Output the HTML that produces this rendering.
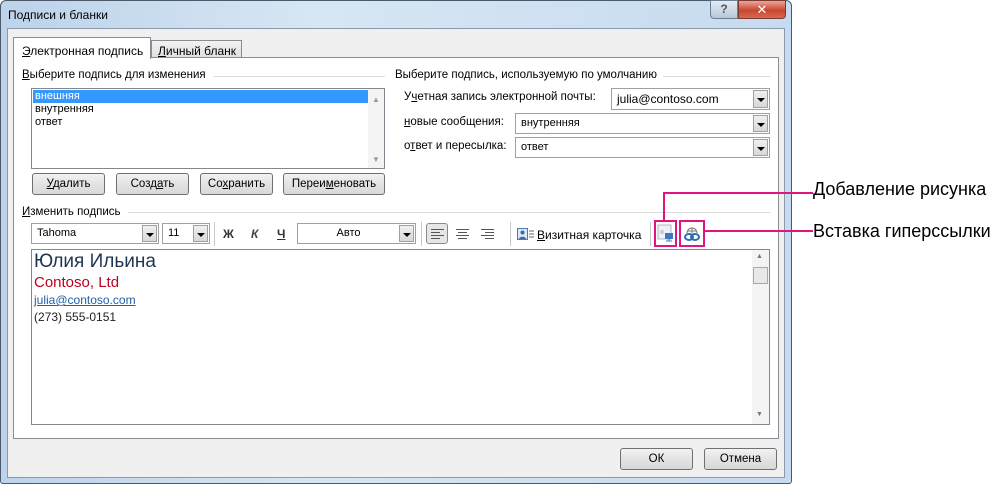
<!DOCTYPE html><html><head><meta charset="utf-8"><style>
body{margin:0;width:995px;height:486px;background:#fff;position:relative;overflow:hidden;font-family:"Liberation Sans","DejaVu Sans",sans-serif;font-size:11px;color:#000}
.a{position:absolute}
.btn{position:absolute;border:1px solid #707070;border-radius:3px;background:linear-gradient(#f2f2f2,#e3e3e3 50%,#d9d9d9);text-align:center;font-size:11.5px;line-height:20px;box-sizing:border-box}
.combo{position:absolute;border:1px solid #a0a0a0;background:#fff;box-sizing:border-box;font-size:11px;padding-left:5px}
.dd{position:absolute;right:1px;top:1px;bottom:1px;width:15px;background:linear-gradient(#f0f0f0,#d8d8d8);border:1px solid #a0a0a0;box-sizing:border-box}
.dd:after{content:"";position:absolute;left:3px;top:7px;border:4px solid transparent;border-top:4px solid #000;border-bottom:0}
.line{position:absolute;height:1px;background:#dcdcdc}
.pink{position:absolute;background:#e0157f}
</style></head><body>
<div class="a" style="left:0;top:0;width:792px;height:484px;background:linear-gradient(90deg,#bcd3ea,#d7e6f4 40%,#c6dbef);border:1px solid #4a5a6a;border-radius:6px 6px 3px 3px;box-sizing:border-box"></div>
<div class="a" style="left:8px;top:8px;font-size:12px">Подписи и бланки</div>
<div class="a" style="left:710px;top:0;width:28px;height:19px;background:linear-gradient(#e4ecf5,#b8c7d8);border:1px solid #6c7f92;border-radius:0 0 0 4px;box-sizing:border-box;text-align:center;color:#555;font-weight:bold;font-size:12px;line-height:17px">?</div>
<div class="a" style="left:738px;top:0;width:48px;height:19px;background:linear-gradient(#e8a89a,#c9462f 55%,#d66a52);border:1px solid #7a3a30;border-radius:0 0 4px 0;box-sizing:border-box;text-align:center;color:#fff;font-weight:bold;font-size:13px;line-height:17px">✕</div>
<div class="a" style="left:7px;top:28px;width:778px;height:450px;background:#f0f0f0;border:1px solid #8a9aab;box-sizing:border-box"></div>
<div class="a" style="left:13px;top:57px;width:766px;height:382px;background:#fff;border:1px solid #898c95;box-sizing:border-box"></div>
<div class="a" style="left:13px;top:37px;width:138px;height:22px;background:#fff;border:1px solid #898c95;border-bottom:none;box-sizing:border-box;padding:6px 0 0 8px;font-size:12px"><u>Э</u>лектронная подпись</div>
<div class="a" style="left:151px;top:40px;width:91px;height:17px;background:linear-gradient(#f3f3f3,#e0e0e0);border:1px solid #898c95;border-bottom:none;box-sizing:border-box;padding:3px 0 0 6px;font-size:12px"><u>Л</u>ичный бланк</div>
<div class="a" style="left:22px;top:69px;font-size:11.5px"><u>В</u>ыберите подпись для изменения</div>
<div class="line" style="left:214px;top:76px;width:171px"></div>
<div class="a" style="left:31px;top:88px;width:354px;height:81px;border:1px solid #828790;box-sizing:border-box;background:#fff"></div>
<div class="a" style="left:33px;top:90px;width:334px;height:13px;background:#3399ff;color:#fff;padding-left:2px;line-height:13px">внешняя</div>
<div class="a" style="left:35px;top:103px;line-height:13px">внутренняя<br>ответ</div>
<div class="a" style="left:368px;top:89px;width:16px;height:79px;background:#f4f4f4"></div>
<div class="a" style="left:372px;top:95px;color:#999;font-size:8px">▲</div>
<div class="a" style="left:372px;top:155px;color:#999;font-size:8px">▼</div>
<div class="btn" style="left:32px;top:173px;width:73px;height:22px"><u>У</u>далить</div>
<div class="btn" style="left:116px;top:173px;width:73px;height:22px">Созд<u>а</u>ть</div>
<div class="btn" style="left:200px;top:173px;width:73px;height:22px">Со<u>х</u>ранить</div>
<div class="btn" style="left:283px;top:173px;width:102px;height:22px">Переи<u>м</u>еновать</div>
<div class="a" style="left:395px;top:69px;font-size:11.5px">Выберите подпись, используемую по умолчанию</div>
<div class="line" style="left:663px;top:76px;width:107px"></div>
<div class="a" style="left:404px;top:91px;font-size:11.5px">У<u>ч</u>етная запись электронной почты:</div>
<div class="combo" style="left:611px;top:88px;width:159px;height:22px;line-height:20px;font-size:12px">julia@contoso.com<div class="dd"></div></div>
<div class="a" style="left:404px;top:116px;font-size:11.5px"><u>н</u>овые сообщения:</div>
<div class="combo" style="left:515px;top:113px;width:255px;height:21px;line-height:19px">внутренняя<div class="dd"></div></div>
<div class="a" style="left:404px;top:140px;font-size:11.5px">о<u>т</u>вет и пересылка:</div>
<div class="combo" style="left:515px;top:137px;width:255px;height:21px;line-height:19px">ответ<div class="dd"></div></div>
<div class="a" style="left:22px;top:206px;font-size:11.5px"><u>И</u>зменить подпись</div>
<div class="line" style="left:128px;top:212px;width:642px"></div>
<div class="combo" style="left:31px;top:223px;width:128px;height:21px;line-height:19px">Tahoma<div class="dd"></div></div>
<div class="combo" style="left:162px;top:223px;width:48px;height:21px;line-height:19px">11<div class="dd"></div></div>
<div class="a" style="left:214px;top:222px;width:1px;height:24px;background:#c8c8c8"></div>
<div class="a" style="left:223px;top:227px;font-weight:bold;font-size:12px;color:#333">Ж</div>
<div class="a" style="left:251px;top:227px;font-weight:bold;font-style:italic;font-size:12px;color:#444">К</div>
<div class="a" style="left:277px;top:227px;font-weight:bold;font-size:12px;color:#333;text-decoration:underline">Ч</div>
<div class="combo" style="left:297px;top:223px;width:119px;height:21px;line-height:19px;text-align:center;padding:0 16px 0 0">Авто<div class="dd"></div></div>
<div class="a" style="left:421px;top:222px;width:1px;height:24px;background:#c8c8c8"></div>
<div class="a" style="left:426px;top:223px;width:22px;height:21px;border:1px solid #8a8a8a;border-radius:3px;background:#e6e6e6;box-sizing:border-box"></div>
<svg class="a" style="left:430px;top:228px" width="80" height="12"><g stroke="#555" stroke-width="1"><path d="M1 1.5h13M1 4.5h9M1 7.5h13M1 10.5h9"/><path d="M26 1.5h13M28 4.5h9M26 7.5h13M28 10.5h9"/><path d="M51 1.5h13M55 4.5h9M51 7.5h13M55 10.5h9"/></g></svg>
<div class="a" style="left:510px;top:222px;width:1px;height:24px;background:#c8c8c8"></div>
<svg class="a" style="left:517px;top:228px" width="18" height="13"><rect x=".5" y=".5" width="10" height="11" fill="#dbe8f5" stroke="#4a7ab5"/><circle cx="5.5" cy="4.5" r="2" fill="#3a6aa5"/><path d="M2 11c0-3 7-3 7 0" fill="#3a6aa5"/><path d="M12 3h5M12 6h5M12 9h5" stroke="#666"/></svg>
<div class="a" style="left:537px;top:228px;font-size:12px"><u>В</u>изитная карточка</div>
<div class="a" style="left:650px;top:222px;width:1px;height:24px;background:#c8c8c8"></div>
<svg class="a" style="left:657px;top:224px" width="17" height="19"><rect x="1" y="1" width="13" height="14" fill="#eef2f6" stroke="#b0b8c0"/><rect x="3" y="6" width="4" height="4" fill="#c8d2dc"/><rect x="8" y="9" width="8" height="6" fill="#3a78c0"/><path d="M12 15v2M9 17h6" stroke="#3a78c0"/></svg>
<svg class="a" style="left:683px;top:224px" width="18" height="19"><path d="M4 9a5 5 0 0 1 10 0" fill="none" stroke="#777"/><path d="M9 4v5M4 7h10" stroke="#777"/><ellipse cx="6" cy="13" rx="4" ry="3" fill="none" stroke="#2a6ab5" stroke-width="2"/><ellipse cx="12" cy="13" rx="4" ry="3" fill="none" stroke="#2a6ab5" stroke-width="2"/></svg>
<div class="pink" style="left:654px;top:220px;width:23px;height:2px"></div>
<div class="pink" style="left:654px;top:245px;width:23px;height:2px"></div>
<div class="pink" style="left:654px;top:220px;width:2px;height:27px"></div>
<div class="pink" style="left:675px;top:220px;width:2px;height:27px"></div>
<div class="pink" style="left:679px;top:220px;width:26px;height:2px"></div>
<div class="pink" style="left:679px;top:245px;width:26px;height:2px"></div>
<div class="pink" style="left:679px;top:220px;width:2px;height:27px"></div>
<div class="pink" style="left:703px;top:220px;width:2px;height:27px"></div>
<div class="pink" style="left:663px;top:192px;width:2px;height:29px"></div>
<div class="pink" style="left:663px;top:192px;width:150px;height:2px"></div>
<div class="pink" style="left:705px;top:230px;width:108px;height:2px"></div>
<div class="a" style="left:813px;top:179px;font-size:18px">Добавление рисунка</div>
<div class="a" style="left:813px;top:221px;font-size:18px">Вставка гиперссылки</div>
<div class="a" style="left:31px;top:249px;width:739px;height:176px;border:1px solid #828790;box-sizing:border-box;background:#fff"></div>
<div class="a" style="left:752px;top:250px;width:17px;height:174px;background:#f4f4f4"></div>
<div class="a" style="left:753px;top:267px;width:15px;height:17px;border:1px solid #aaa;box-sizing:border-box;background:#e8e8e8"></div>
<div class="a" style="left:756px;top:253px;color:#777;font-size:7px">▲</div>
<div class="a" style="left:756px;top:411px;color:#777;font-size:7px">▼</div>
<div class="a" style="left:34px;top:251px;font-size:19px;color:#1f3552">Юлия Ильина</div>
<div class="a" style="left:34px;top:274px;font-size:15px;color:#c00020">Contoso, Ltd</div>
<div class="a" style="left:34px;top:293px;font-size:12px;color:#1f5fa8;text-decoration:underline">julia@contoso.com</div>
<div class="a" style="left:34px;top:310px;font-size:12px;color:#222">(273) 555-0151</div>
<div class="btn" style="left:620px;top:448px;width:73px;height:22px">ОК</div>
<div class="btn" style="left:704px;top:448px;width:73px;height:22px">Отмена</div>
</body></html>
